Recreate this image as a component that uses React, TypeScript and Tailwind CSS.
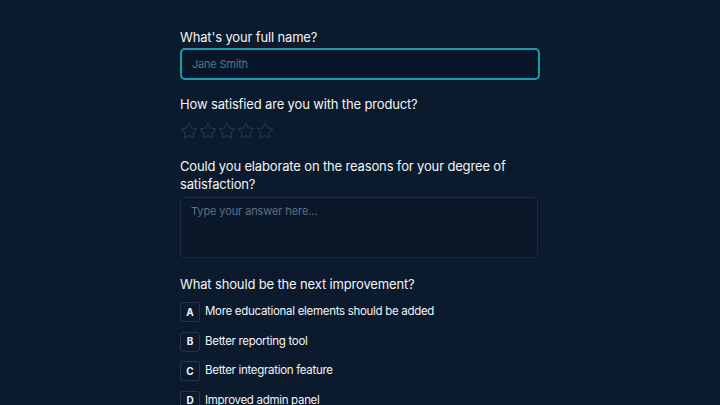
import { Star } from "lucide-react";

const options = [
  { key: "A", label: "More educational elements should be added" },
  { key: "B", label: "Better reporting tool" },
  { key: "C", label: "Better integration feature" },
  { key: "D", label: "Improved admin panel" },
];

export default function App() {
  return (
    <div
      className="h-[405px] w-[720px] overflow-hidden bg-[#0b1a2c] text-[#f1f5f9]"
      style={{ fontFamily: "Inter, 'Noto Sans', sans-serif" }}
    >
      <div className="mx-auto w-[360px] pt-[27px]">
        {/* Name */}
        <label className="block text-[13px] leading-5 tracking-[-0.15px]">What's your full name?</label>
        <input
          placeholder="Jane Smith"
          className="mt-px block h-[32px] w-full rounded-[5px] border-2 border-[#1d9ab2] bg-[#08162a] px-[10px] text-[11px] tracking-[-0.2px] text-white outline-none placeholder:text-[#5f6f85]"
        />

        {/* Rating */}
        <p className="mt-[14px] text-[13px] leading-5 tracking-[-0.15px]">How satisfied are you with the product?</p>
        <div className="mt-[8px] flex gap-px">
          {[0, 1, 2, 3, 4].map((i) => (
            <Star key={i} className="h-[18px] w-[18px] text-[#1e3752]" strokeWidth={1.5} />
          ))}
        </div>

        {/* Elaborate */}
        <p className="mt-[17px] text-[13px] leading-[18px] tracking-[-0.15px]">
          Could you elaborate on the reasons for your degree of satisfaction?
        </p>
        <textarea
          placeholder="Type your answer here..."
          className="mt-1 block h-[61px] w-[358px] resize-none rounded-[4px] border border-[#1a2c42] bg-[#0a1829] px-[10px] py-[5px] text-[11px] tracking-[-0.1px] text-white outline-none placeholder:text-[#5f6f85]"
        />

        {/* Improvement */}
        <p className="mt-[16px] text-[13px] leading-5 tracking-[-0.15px]">What should be the next improvement?</p>
        <div className="mt-[8px] flex flex-col gap-[9.5px]">
          {options.map((o) => (
            <div key={o.key} className="flex items-center gap-[5px]">
              <span className="flex h-[20px] w-[20px] items-center justify-center rounded-[3px] border border-[#24344a] bg-[#0b1a2c] text-[10px] font-bold">
                {o.key}
              </span>
              <span className="text-[11.5px] tracking-[-0.3px]">{o.label}</span>
            </div>
          ))}
        </div>
      </div>
    </div>
  );
}
